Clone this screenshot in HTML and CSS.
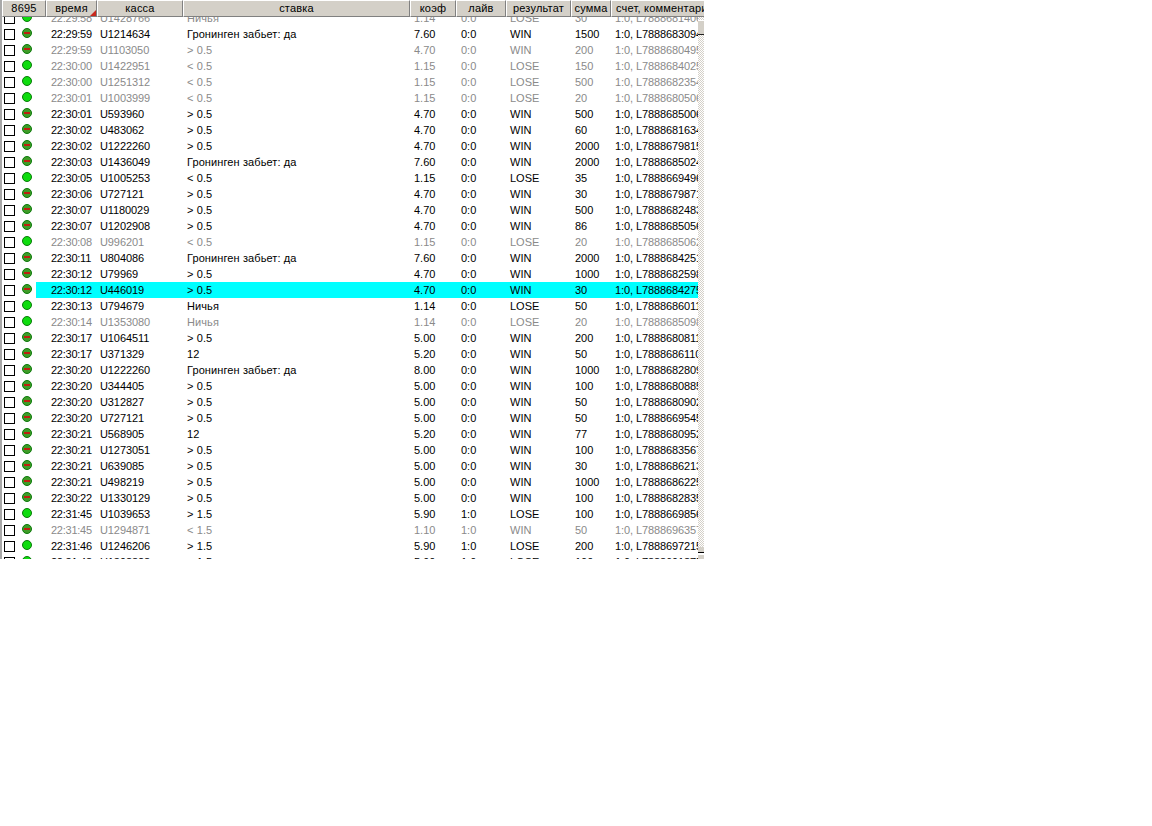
FILE: index.html
```html
<!DOCTYPE html>
<html lang="en">
<head>
  <meta charset="UTF-8">
  <title>Ставки</title>
  <link rel="stylesheet" href="styles.css">
</head>
<body>

<div class="window">
  <div class="header">
    <div class="hcell">8695</div>
    <div class="hcell sorted">время</div>
    <div class="hcell">касса</div>
    <div class="hcell">ставка</div>
    <div class="hcell">коэф</div>
    <div class="hcell">лайв</div>
    <div class="hcell">результат</div>
    <div class="hcell">сумма</div>
    <div class="hcell left">счет, комментарий</div>
  </div>

  <div class="body">
    <div class="rows" id="rows"></div>
    <div class="scrollbar">
      <div class="sbtn"></div>
      <div class="sbtn end"></div>
    </div>
  </div>
</div>

<script src="rows.js"></script>

</body>
</html>
```

FILE: styles.css
```css
body {
  margin: 0;
  background: #fff;
  font-family: "Liberation Sans", Arial, sans-serif;
  font-size: 11px;
  color: #000;
}
.window {
  width: 702px;
  height: 559px;
  border-left: 2px solid #a8a8a8;
  display: flex;
  flex-direction: column;
  overflow: hidden;
}
.header {
  display: grid;
  grid-template-columns: 44px 51px 86px 227px 46px 50px 65px 40px 93px;
  height: 17px;
  flex: none;
  background: #d4d0c8;
}
.hcell {
  position: relative;
  box-sizing: border-box;
  border-top: 1px solid #fff;
  border-left: 1px solid #fff;
  border-right: 1px solid #808080;
  border-bottom: 1px solid #808080;
  background: #d4d0c8;
  line-height: 14px;
  letter-spacing: 0.2px;
  text-align: center;
  white-space: nowrap;
  overflow: hidden;
}
.hcell.left {
  text-align: left;
  padding-left: 4px;
  border-right: none;
}
.hcell.sorted::after {
  content: "";
  position: absolute;
  right: 0;
  bottom: 0;
  border-left: 6px solid transparent;
  border-bottom: 6px solid #c8281e;
}
.body {
  display: flex;
  flex: 1;
  min-height: 0;
}
.rows {
  flex: 1;
  overflow: hidden;
}
.row {
  display: grid;
  grid-template-columns: 34px 61px 86px 227px 46px 50px 65px 40px 87px;
  height: 16px;
  line-height: 16px;
  white-space: nowrap;
}
.row:first-child {
  margin-top: -7px;
}
.row.grey .cell {
  color: #8a8a8a;
}
.row.sel .cell {
  background: #00ffff;
}
.cell {
  overflow: hidden;
  padding-left: 4px;
}
.cell.time {
  padding-left: 15px;
  letter-spacing: -0.25px;
}
.cell.kassa {
  padding-left: 3px;
  letter-spacing: -0.1px;
}
.cell.bet {
  letter-spacing: 0.1px;
}
.cell.live {
  padding-left: 5px;
}
.cell.note {
  letter-spacing: -0.1px;
}
.marks {
  display: flex;
  align-items: center;
  padding-left: 2px;
  gap: 7px;
}
.check {
  box-sizing: border-box;
  width: 11px;
  height: 11px;
  border: 1px solid #000;
  background: #fff;
}
.dot {
  box-sizing: border-box;
  position: relative;
  width: 10px;
  height: 10px;
  margin-top: -2px;
  border-radius: 50%;
  border: 1px solid #0a7a0a;
  background: #0fdc0f;
}
.dot.minus {
  background: #3f9c28;
}
.dot.minus::after {
  content: "";
  position: absolute;
  left: 1px;
  top: 3px;
  width: 6px;
  height: 2px;
  background: #c01f10;
}
.scrollbar {
  width: 6px;
  flex: none;
  display: flex;
  flex-direction: column;
  justify-content: space-between;
  background: repeating-conic-gradient(#d4d0c8 0 25%, #fff 0 50%) 0 0 / 2px 2px;
  padding-top: 3px;
}
.sbtn {
  height: 13px;
  background: #d4d0c8;
  border-top: 1px solid #fff;
  border-bottom: 1px solid #202020;
}
.sbtn.end {
  height: 12px;
  border: none;
  background: linear-gradient(#d4d0c8 0 5px, #000 5px 6px, #fff 6px 8px, #d4d0c8 8px);
}
```

FILE: rows.js
```js
const WIN = "WIN", LOSE = "LOSE";
const GOAL = "Гронинген забьет: да";

// time, kassa, bet, coef, live, result, sum, comment, grey
const data = [
  ["22:29:58", "U1428766", "Ничья", "1.14", "0:0", LOSE, "30", "L78886814060", 1],
  ["22:29:59", "U1214634", GOAL, "7.60", "0:0", WIN, "1500", "L78886830948", 0],
  ["22:29:59", "U1103050", "> 0.5", "4.70", "0:0", WIN, "200", "L78886804950", 1],
  ["22:30:00", "U1422951", "< 0.5", "1.15", "0:0", LOSE, "150", "L78886840250", 1],
  ["22:30:00", "U1251312", "< 0.5", "1.15", "0:0", LOSE, "500", "L78886823540", 1],
  ["22:30:01", "U1003999", "< 0.5", "1.15", "0:0", LOSE, "20", "L78886805060", 1],
  ["22:30:01", "U593960", "> 0.5", "4.70", "0:0", WIN, "500", "L78886850060", 0],
  ["22:30:02", "U483062", "> 0.5", "4.70", "0:0", WIN, "60", "L78886816340", 0],
  ["22:30:02", "U1222260", "> 0.5", "4.70", "0:0", WIN, "2000", "L78886798150", 0],
  ["22:30:03", "U1436049", GOAL, "7.60", "0:0", WIN, "2000", "L78886850240", 0],
  ["22:30:05", "U1005253", "< 0.5", "1.15", "0:0", LOSE, "35", "L78886694960", 0],
  ["22:30:06", "U727121", "> 0.5", "4.70", "0:0", WIN, "30", "L78886798710", 0],
  ["22:30:07", "U1180029", "> 0.5", "4.70", "0:0", WIN, "500", "L78886824830", 0],
  ["22:30:07", "U1202908", "> 0.5", "4.70", "0:0", WIN, "86", "L78886850560", 0],
  ["22:30:08", "U996201", "< 0.5", "1.15", "0:0", LOSE, "20", "L78886850620", 1],
  ["22:30:11", "U804086", GOAL, "7.60", "0:0", WIN, "2000", "L78886842510", 0],
  ["22:30:12", "U79969", "> 0.5", "4.70", "0:0", WIN, "1000", "L78886825980", 0],
  ["22:30:12", "U446019", "> 0.5", "4.70", "0:0", WIN, "30", "L78886842750", 0, "sel"],
  ["22:30:13", "U794679", "Ничья", "1.14", "0:0", LOSE, "50", "L78886860110", 0],
  ["22:30:14", "U1353080", "Ничья", "1.14", "0:0", LOSE, "20", "L78886850980", 1],
  ["22:30:17", "U1064511", "> 0.5", "5.00", "0:0", WIN, "200", "L78886808110", 0],
  ["22:30:17", "U371329", "12", "5.20", "0:0", WIN, "50", "L78886861100", 0],
  ["22:30:20", "U1222260", GOAL, "8.00", "0:0", WIN, "1000", "L78886828090", 0],
  ["22:30:20", "U344405", "> 0.5", "5.00", "0:0", WIN, "100", "L78886808850", 0],
  ["22:30:20", "U312827", "> 0.5", "5.00", "0:0", WIN, "50", "L78886809020", 0],
  ["22:30:20", "U727121", "> 0.5", "5.00", "0:0", WIN, "50", "L78886695450", 0],
  ["22:30:21", "U568905", "12", "5.20", "0:0", WIN, "77", "L78886809520", 0],
  ["22:30:21", "U1273051", "> 0.5", "5.00", "0:0", WIN, "100", "L78886835670", 0],
  ["22:30:21", "U639085", "> 0.5", "5.00", "0:0", WIN, "30", "L78886862130", 0],
  ["22:30:21", "U498219", "> 0.5", "5.00", "0:0", WIN, "1000", "L78886862250", 0],
  ["22:30:22", "U1330129", "> 0.5", "5.00", "0:0", WIN, "100", "L78886828350", 0],
  ["22:31:45", "U1039653", "> 1.5", "5.90", "1:0", LOSE, "100", "L78886698560", 0],
  ["22:31:45", "U1294871", "< 1.5", "1.10", "1:0", WIN, "50", "L78886963570", 1],
  ["22:31:46", "U1246206", "> 1.5", "5.90", "1:0", LOSE, "200", "L78886972150", 0],
  ["22:31:48", "U1398828", "> 1.5", "5.90", "1:0", LOSE, "100", "L78886918750", 0]
];

const classes = ["time", "kassa", "bet", "coef", "live", "res", "sum"];
const rowsEl = document.getElementById("rows");

data.forEach(r => {
  const row = document.createElement("div");
  row.className = "row" + (r[8] ? " grey" : "") + (r[9] ? " " + r[9] : "");

  const marks = document.createElement("div");
  marks.className = "marks";
  const dotClass = r[5] === WIN ? "dot minus" : "dot";
  marks.innerHTML = `<span class="check"></span><span class="${dotClass}"></span>`;
  row.appendChild(marks);

  classes.forEach((c, i) => {
    const cell = document.createElement("div");
    cell.className = "cell " + c;
    cell.textContent = r[i];
    row.appendChild(cell);
  });

  const note = document.createElement("div");
  note.className = "cell note";
  note.textContent = "1:0, " + r[7];
  row.appendChild(note);

  rowsEl.appendChild(row);
});
```
